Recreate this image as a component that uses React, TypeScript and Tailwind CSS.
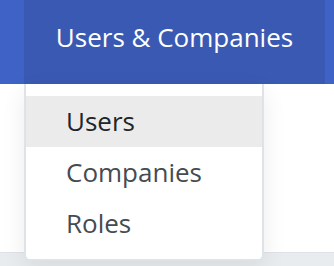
export default function App() {
  const items = ["Users", "Companies", "Roles"];
  return (
    <div
      className="relative w-[334px] h-[266px] overflow-hidden bg-white flex flex-col"
      style={{ fontFamily: '"Open Sans", "Noto Sans", sans-serif' }}
    >
      <div className="flex h-[84px] bg-[#3e62c6] shrink-0">
        <div className="ml-[24px] w-[301px] bg-[#3a59b2] flex justify-center">
          <span className="pt-[20px] text-[26px] leading-[35px] text-white">
            Users &amp; Companies
          </span>
        </div>
      </div>
      <div className="flex-1 bg-white" />
      <div className="h-[14px] bg-[#e9ecef] border-t border-[#dee2e6] shrink-0" />
      <div className="absolute left-[24px] top-[84px] w-[240px] h-[177px] bg-white border-2 border-t-0 border-[#dfe3e7] rounded-b-[6px] shadow-[0_8px_24px_rgba(0,0,0,0.08)] pt-[12px]">
        {items.map((it, i) => (
          <div
            key={it}
            className={
              i === 0
                ? "h-[51px] pt-[8px] pl-[40px] bg-[#ebebeb] text-[26px] leading-[35px] text-[#212529]"
                : "h-[51px] pt-[8px] pl-[40px] text-[26px] leading-[35px] text-[#454b52]"
            }
          >
            {it}
          </div>
        ))}
      </div>
    </div>
  );
}
